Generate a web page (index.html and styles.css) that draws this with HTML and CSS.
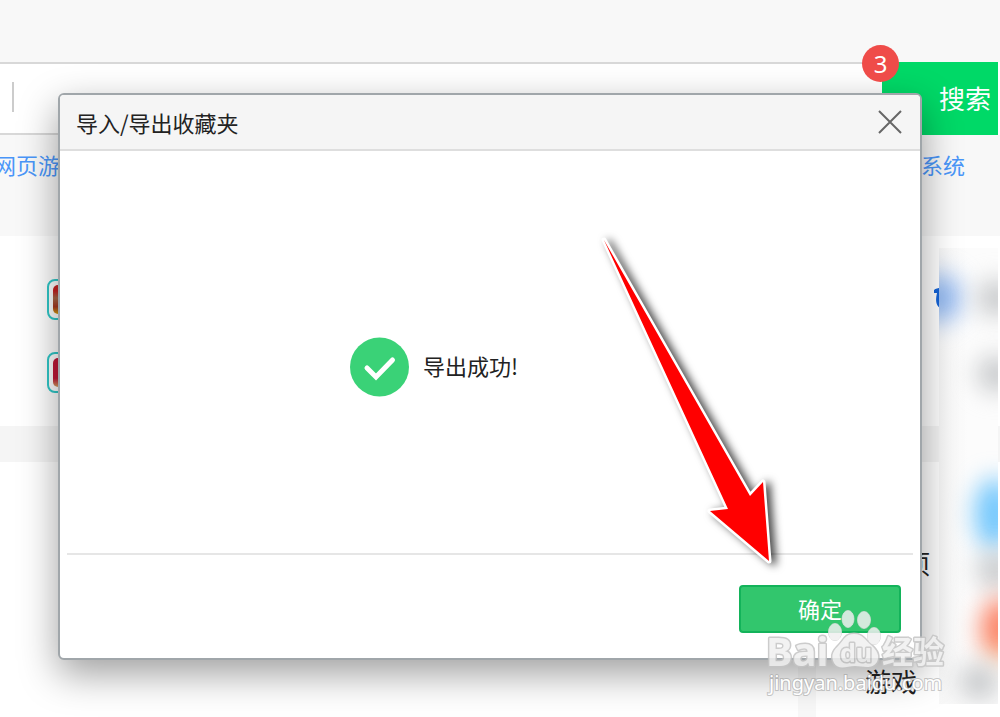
FILE: index.html
```html
<!DOCTYPE html>
<html lang="zh-CN">
  <head>
    <meta charset="UTF-8" />
    <meta name="viewport" content="width=device-width, initial-scale=1.0" />
    <title>导入/导出收藏夹</title>
    <link rel="stylesheet" href="styles.css">
  </head>

  <body>
    <div class="topbar"></div>

    <form class="search">
      <input class="search-input" type="text" aria-label="搜索" />
      <button class="search-btn" type="button">搜索</button>
      <span class="step">3</span>
    </form>

    <nav class="links">
      <a href="#">网页游戏</a>
      <a href="#">系统</a>
    </nav>

    <section class="sites">
      <a class="site" href="#" aria-label="游戏"><span class="thumb"></span></a>
      <a class="site" href="#" aria-label="网页"><span class="thumb pink"></span></a>
    </section>

    <div class="band"></div>

    <section class="lower">
      <div class="divider"></div>
      <div class="side-links">
        <a href="#">常用项</a>
        <a href="#">游戏</a>
      </div>
    </section>

    <!-- Blurred side icons -->
    <svg class="mark" width="10" height="26" viewBox="0 0 10 26" aria-hidden="true">
      <path d="M3 3C5 1 8 1 12 1V22C5 21 4 14 6 6L3 6Z" fill="#1464d8" />
    </svg>
    <div class="blurred">
      <span class="blob blue"></span>
      <span class="blob gray"></span>
      <span class="blob gray second"></span>
      <span class="blob sky"></span>
      <span class="blob gray third"></span>
      <span class="blob orange"></span>
      <span class="blob gray fourth"></span>
    </div>

    <!-- Dialog -->
    <div class="dialog" role="dialog" aria-labelledby="dialog-title">
      <header class="dialog-header">
        <h1 id="dialog-title">导入/导出收藏夹</h1>
        <button class="close" type="button" aria-label="关闭">
          <svg width="26" height="26" viewBox="0 0 26 26">
            <path d="M1 2L23 24M23 2L1 24" stroke="#666" stroke-width="2" />
          </svg>
        </button>
      </header>
      <div class="dialog-body">
        <svg width="60" height="60" viewBox="0 0 60 60" aria-hidden="true">
          <circle cx="29.5" cy="30" r="29.5" fill="#3ad277" />
          <path d="M17 31L26 40L42.5 23" fill="none" stroke="#fff" stroke-width="5" stroke-linecap="round" />
        </svg>
        <p>导出成功!</p>
      </div>
      <footer class="dialog-footer">
        <button class="ok" type="button">确定</button>
      </footer>

      <svg class="arrow" width="200" height="350" viewBox="0 0 200 350" aria-hidden="true">
        <path d="M14 11L160 267L173 253L179 332L120 282L138 280Z" fill="#f00" stroke="#fff" stroke-width="5" stroke-linejoin="round" paint-order="stroke" />
      </svg>
    </div>

    <!-- Watermark -->
    <svg class="watermark" width="190" height="100" viewBox="0 0 190 100" aria-hidden="true">
      <g class="wm-logo">
        <text class="wm-latin" x="4" y="64">Bai</text>
        <path d="M72 61C68 53 72 48 77 43C82 38 83 32 92 32S103 38 109 43C115 48 118 54 115 60C110 68 101 64 93 64S77 69 72 61Z" />
        <g class="toes">
          <ellipse cx="73" cy="30" rx="6.5" ry="8.5" />
          <ellipse cx="86" cy="17" rx="6" ry="8.5" />
          <ellipse cx="102" cy="18" rx="6.5" ry="8.5" />
          <ellipse cx="112" cy="34" rx="6.5" ry="8.5" />
        </g>
        <text class="wm-du" x="78" y="60">du</text>
        <text class="wm-cjk" x="120" y="61">经验</text>
      </g>
      <text class="wm-url" x="7" y="88">jingyan.baidu.com</text>
    </svg>
  </body>
</html>
```

FILE: styles.css
```css
* {
  box-sizing: border-box;
}

body {
  margin: 0;
  position: relative;
  min-height: 100vh;
  display: flex;
  flex-direction: column;
  overflow: hidden;
  background: #fff;
  color: #222;
  font-family: "Noto Sans CJK SC", sans-serif;
  font-size: 22px;
}

a {
  text-decoration: none;
}

button {
  border: none;
  font-family: inherit;
  cursor: pointer;
}

/* Top of the page */
.topbar {
  height: 62px;
  background: #f8f8f8;
}

.search {
  position: relative;
  display: flex;
  height: 73px;
  padding-right: 2px;
}

.search-input {
  flex: 1;
  min-width: 0;
  border: solid #d8d8d8;
  border-width: 2px 0;
  background: linear-gradient(#ccc, #ccc) 12px 18px / 2px 30px no-repeat #fff;
}

.search-btn {
  width: 116px;
  padding: 0 7px 2px 0;
  background: #00d967;
  color: #fff;
  font-size: 26px;
  text-align: right;
}

.step {
  position: absolute;
  z-index: 3;
  top: -17px;
  right: 101px;
  width: 37px;
  height: 37px;
  border-radius: 50%;
  background: #ef4c49;
  color: #fff;
  font-family: "Noto Sans", sans-serif;
  font-size: 24px;
  line-height: 37px;
  text-align: center;
}

.links {
  display: flex;
  justify-content: space-between;
  height: 101px;
  padding: 13px 35px 0 0;
  background: #f8f8f8;
  line-height: 32px;
}

.links a {
  color: #4a96f8;
}

.links a:first-child {
  margin-left: -6px;
}

.sites {
  display: flex;
  flex-direction: column;
  gap: 32px;
  height: 190px;
  padding: 43px 47px 0;
}

.site {
  width: 41px;
  height: 41px;
  padding: 4px;
  border: 2px solid #30c8c8;
  border-radius: 8px;
  background: #fff;
}

.thumb {
  display: block;
  height: 29px;
  border-radius: 5px;
  background: linear-gradient(#c82020 20%, #a86848 45%, #a83820 75%, #d8a010);
}

.thumb.pink {
  background: linear-gradient(#c01838 70%, #d8a060);
}

.band {
  height: 36px;
  background: #f5f5f5;
}

.lower {
  flex: 1;
  display: flex;
  justify-content: flex-end;
}

.divider {
  width: 18px;
  background: #f8f8f8;
}

.side-links {
  display: flex;
  flex-direction: column;
  align-items: center;
  gap: 78px;
  width: 184px;
  padding: 81px 34px 0 0;
  font-size: 26px;
  line-height: 40px;
}

.side-links a {
  color: #222;
}

/* Blurred icons on the right */
.mark {
  position: absolute;
  top: 287px;
  right: 59px;
}

.blurred {
  position: absolute;
  top: 248px;
  right: 2px;
  width: 59px;
  height: 456px;
  overflow: hidden;
  background: linear-gradient(to right, #f8f8f8, #fcfcfc 50%);
}

.blob {
  position: absolute;
  width: 40px;
  height: 40px;
  border-radius: 50%;
  filter: blur(12px);
}

.blue {
  top: 26px;
  left: -22px;
  width: 44px;
  height: 48px;
  background: #8db5f0;
}

.gray {
  top: 32px;
  left: 38px;
  height: 36px;
  background: #c6c8ca;
}

.second {
  top: 108px;
}

.sky {
  top: 230px;
  left: 36px;
  height: 72px;
  background: #70c6fc;
}

.third {
  top: 304px;
}

.orange {
  top: 350px;
  left: 42px;
  height: 64px;
  background: linear-gradient(#fb7e60 70%, #f0d090);
}

.fourth {
  top: 416px;
  left: 20px;
}

/* Dialog */
.dialog {
  position: absolute;
  z-index: 2;
  top: 93px;
  left: 58px;
  right: 78px;
  border: 2px solid #a0a6aa;
  border-radius: 6px;
  background: #fff;
  box-shadow: 0 14px 38px rgba(0, 0, 0, 0.38);
}

.dialog-header {
  display: flex;
  justify-content: space-between;
  align-items: center;
  height: 56px;
  padding: 0 16px;
  border-bottom: 2px solid #dedede;
  border-radius: 4px 4px 0 0;
  background: #f5f5f5;
}

.dialog-header h1 {
  margin: 0;
  font-size: 22px;
  font-weight: 400;
}

.close {
  display: flex;
  padding: 0;
  background: none;
}

.dialog-body {
  display: flex;
  align-items: center;
  justify-content: center;
  gap: 13px;
  height: 402px;
  padding: 30px 112px 0 0;
}

.dialog-body p {
  margin: 0;
  padding-bottom: 4px;
}

.dialog-footer {
  display: flex;
  justify-content: flex-end;
  margin: 0 7px;
  padding: 30px 12px 25px;
  border-top: 2px solid #e6e6e6;
}

.ok {
  width: 162px;
  height: 48px;
  padding: 0 0 2px;
  border: 2px solid #13b35a;
  border-radius: 4px;
  background: #32c66d;
  color: #fff;
  font-size: 22px;
}

.arrow {
  position: absolute;
  top: 134px;
  right: 130px;
  overflow: visible;
  filter: drop-shadow(5px 2px 4px rgba(0, 0, 0, 0.7));
}

/* Watermark */
.watermark {
  position: absolute;
  z-index: 4;
  top: 602px;
  right: 48px;
}

.wm-logo {
  fill: #f0f0f0;
  stroke: #c4c4c4;
  stroke-width: 3px;
  stroke-linejoin: round;
  paint-order: stroke;
  opacity: 0.85;
}

.toes {
  stroke: #d0d0d0;
  stroke-width: 1px;
}

.wm-latin {
  font: 700 40px "Noto Sans", sans-serif;
}

.wm-du {
  font: 700 25px "Noto Sans", sans-serif;
}

.wm-cjk {
  font: 700 31px "Noto Sans CJK SC", sans-serif;
}

.wm-url {
  fill: #fff;
  stroke: rgba(150, 150, 150, 0.5);
  stroke-width: 2px;
  paint-order: stroke;
  font: 400 20px "Noto Sans", sans-serif;
}
```
